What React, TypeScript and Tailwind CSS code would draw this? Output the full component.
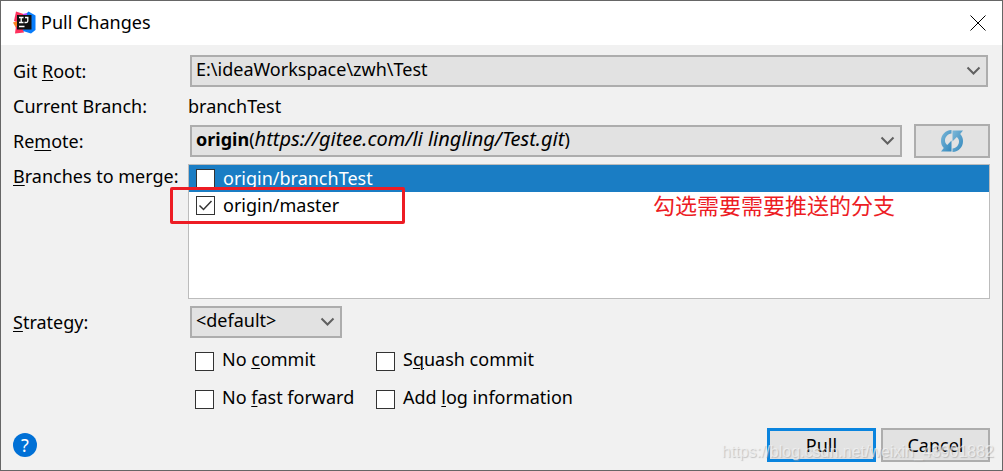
import React from 'react';
import { clsx } from 'clsx';

const branches = [
  { name: 'origin/branchTest', checked: false, selected: true },
  { name: 'origin/master', checked: true, selected: false },
];

const options = [
  { id: 'no-commit', before: 'No ', key: 'c', after: 'ommit' },
  { id: 'squash', before: 'S', key: 'q', after: 'uash commit' },
  { id: 'no-ff', before: 'No ', key: 'f', after: 'ast forward' },
  { id: 'add-log', before: 'Add ', key: 'l', after: 'og information' },
];

const Mnemonic: React.FC<{ children: React.ReactNode }> = ({ children }) => (
  <span className="underline decoration-1 underline-offset-2">{children}</span>
);

const Chevron: React.FC = () => (
  <svg
    className="col-start-1 row-start-1 pointer-events-none justify-self-end self-center mr-1 w-4 h-4"
    viewBox="0 0 16 16"
    fill="none"
    stroke="#606060"
    strokeWidth="2"
  >
    <path d="M1.500 4.500 7.500 10.500 13.500 4.500" />
  </svg>
);

interface ComboProps {
  id: string;
  value: string;
  className?: string;
  children?: React.ReactNode;
}

// Children, when given, replace the plain text of the selected option
const Combo: React.FC<ComboProps> = ({ id, value, className, children }) => (
  <div className={clsx('grid h-8 border-2 border-[#adadad] bg-[#e2e2e2]', className)}>
    <select
      id={id}
      className={clsx(
        'col-start-1 row-start-1 w-full h-7 appearance-none bg-transparent pl-1 pr-6 pb-1 outline-none',
        children && 'text-transparent'
      )}
    >
      <option label={children ? ' ' : undefined} value={value}>
        {children ? '' : value}
      </option>
    </select>
    {children && (
      <span className="col-start-1 row-start-1 pointer-events-none pl-1 leading-6 whitespace-nowrap">
        {children}
      </span>
    )}
    <Chevron />
  </div>
);

const CheckBox: React.FC<{ id: string; checked?: boolean }> = ({ id, checked }) => (
  <span className="grid shrink-0">
    <input
      id={id}
      type="checkbox"
      defaultChecked={checked}
      className="peer col-start-1 row-start-1 w-[19px] h-[19px] appearance-none border border-[#333] bg-white"
    />
    <svg
      className="col-start-1 row-start-1 w-[19px] h-[19px] pointer-events-none invisible peer-checked:visible"
      viewBox="0 0 19 19"
      fill="none"
      stroke="#333"
      strokeWidth="1.5"
    >
      <path d="M3.5 9.5 7.5 13.5 15.5 5" />
    </svg>
  </span>
);

const AppLogo: React.FC = () => (
  <svg className="w-6 h-6" viewBox="0 0 24 24">
    <path d="M3 .5 12 3.500 12 14 1 10Z" fill="#fe315d" />
    <path d="M0 11.500 8 9 9 20 3 17Z" fill="#fc801d" />
    <path d="M3 15 10 18 11 21.500 2 22.500Z" fill="#fe315d" />
    <path d="M12 4 15.500 .5 22.500 4.500 22.500 19 18 22.500 10 20Z" fill="#087cfa" />
    <path d="M10 3 14 2 14 5 10 5Z" fill="#b74af7" />
    <rect x="4" y="4" width="14.500" height="14.500" fill="#111" />
    <path
      d="M6 6.500h4.500M8.200 6.500v5M6 11.500h4.500M12 6.500h3.500M14.800 6.500v3.500q0 1.500-1.500 1.500h-1.800M6 15.500h5.500"
      fill="none"
      stroke="#fff"
      strokeWidth="1.300"
    />
  </svg>
);

const RefreshIcon: React.FC = () => (
  <svg className="w-6 h-6" viewBox="0 0 24 24">
    <defs>
      <linearGradient id="refresh-fill" x2="1" y2="1">
        <stop offset="0" stopColor="#7db8d8" />
        <stop offset="1" stopColor="#3388bd" />
      </linearGradient>
    </defs>
    <g fill="url(#refresh-fill)">
      <path d="M11.500 1C5 1.500 1 6 1 12c0 3 1 5 2.800 7L1 22.500h10.500V11.500L7.200 16C5.800 14.800 5 13.500 5 11.500c0-3.500 2.500-6.500 6.500-7Z" />
      <path d="M12.500 23C19 22.500 23 18 23 12c0-3-1-5-2.800-7L23 1.500H12.500v11L16.800 8C18.200 9.200 19 10.500 19 12.500c0 3.500-2.500 6.500-6.500 7Z" />
    </g>
  </svg>
);

export default function App() {
  return (
    <div className="relative min-h-screen flex flex-col border border-[#666] bg-[#f1f1f1] text-black text-[18px] leading-6 font-['Noto_Sans','Noto_Sans_CJK_SC',sans-serif]">
      <header className="flex items-center h-11 pl-3 pr-4 bg-white">
        <AppLogo />
        <h1 className="ml-1 pb-0.5">Pull Changes</h1>
        <button type="button" aria-label="Close" className="ml-auto">
          <svg className="w-4 h-4" viewBox="0 0 16 16" stroke="#000">
            <path d="M.5.5 15.500 15.500M15.500.5.5 15.500" />
          </svg>
        </button>
      </header>

      <main className="grow flex flex-col px-3 pt-2.5 pb-2">
        <div className="flex items-center">
          <label htmlFor="git-root" className="w-[175px] shrink-0">
            Git <Mnemonic>R</Mnemonic>oot:
          </label>
          <Combo id="git-root" value="E:\ideaWorkspace\zwh\Test" className="grow mx-0.5" />
        </div>

        <div className="flex items-center h-[37px]">
          <span className="w-[175px] shrink-0">Current Branch:</span>
          <span>branchTest</span>
        </div>

        <div className="flex items-center">
          <label htmlFor="remote" className="w-[175px] shrink-0">
            Re<Mnemonic>m</Mnemonic>ote:
          </label>
          <Combo id="remote" value="origin" className="grow ml-0.5 mr-3">
            <b>origin</b>(<i className="text-[20px]">https://gitee.com/li lingling/Test.git</i>)
          </Combo>
          <button
            type="button"
            aria-label="Refresh"
            className="flex items-center justify-center w-[76px] h-[34px] border-2 border-[#adadad] bg-[#e2e2e2]"
          >
            <RefreshIcon />
          </button>
        </div>

        <div className="flex items-start mt-1.5">
          <span className="w-[175px] shrink-0 whitespace-nowrap">
            <Mnemonic>B</Mnemonic>ranches to merge:
          </span>
          <ul className="grow h-[135px] border border-[#bcbcbc] bg-white">
            {branches.map((branch) => (
              <li
                key={branch.name}
                className={clsx(
                  'relative flex items-center h-[27px] pl-[7px]',
                  branch.selected && 'bg-[#1a7dc4] text-white'
                )}
              >
                <CheckBox id={branch.name} checked={branch.checked} />
                <label htmlFor={branch.name} className="ml-2 pb-0.5">
                  {branch.name}
                </label>
                {branch.checked && (
                  <>
                    <span className="absolute -left-[19px] -top-[5px] w-[235px] h-[37px] border-3 border-[#ed1c24] rounded-xs" />
                    <span className="absolute left-[464px] -top-0.5 text-[22px] leading-7 text-[#ed1c24] whitespace-nowrap font-['Noto_Sans_CJK_SC',sans-serif]">
                      勾选需要需要推送的分支
                    </span>
                  </>
                )}
              </li>
            ))}
          </ul>
        </div>

        <div className="flex items-center mt-[7px]">
          <label htmlFor="strategy" className="w-[175px] shrink-0">
            <Mnemonic>S</Mnemonic>trategy:
          </label>
          <Combo id="strategy" value="<default>" className="w-[152px] ml-0.5" />
        </div>

        <div className="grid grid-cols-[181px_1fr] mt-1 ml-[182px]">
          {options.map((option) => (
            <div key={option.id} className="flex items-center h-[38px]">
              <CheckBox id={option.id} />
              <label htmlFor={option.id} className="ml-2 pb-1 whitespace-nowrap">
                {option.before}
                <Mnemonic>{option.key}</Mnemonic>
                {option.after}
              </label>
            </div>
          ))}
        </div>

        <footer className="flex items-center mt-auto">
          <button
            type="button"
            aria-label="Help"
            className="w-6 h-6 rounded-full bg-[#0070d6] text-white"
          >
            ?
          </button>
          <button
            type="button"
            className="ml-auto w-[109px] h-[34px] border-3 border-[#0a84de] bg-[#e2e2e2]"
          >
            Pull
          </button>
          <button
            type="button"
            className="ml-[5px] w-[109px] h-[34px] border-2 border-[#adadad] bg-[#e2e2e2]"
          >
            Cancel
          </button>
        </footer>
      </main>

      <span className="absolute right-2 bottom-1.5 pointer-events-none text-[16px] text-[#f4f4f4]/70 text-shadow-[1px_1px_1px_#9998] font-['Liberation_Sans',sans-serif]">
        https://blog.csdn.net/weixin_43901882
      </span>
    </div>
  );
}
